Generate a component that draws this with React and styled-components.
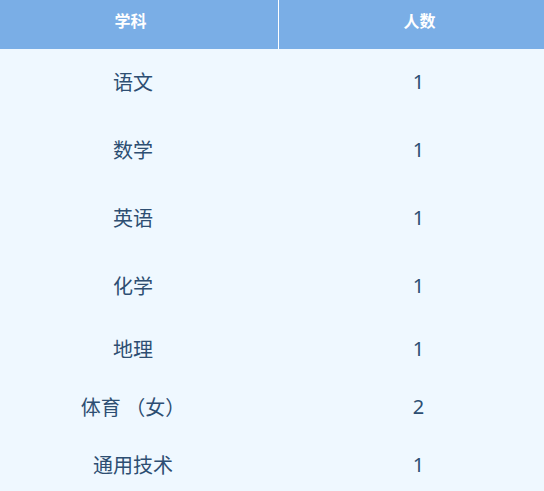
import React from 'react';
import styled, { createGlobalStyle } from 'styled-components';

const GlobalStyle = createGlobalStyle`
  html, body {
    margin: 0;
    padding: 0;
    background: #eff8ff;
    overflow: hidden;
  }
  body {
    font-family: "Noto Sans", "Noto Sans CJK SC", sans-serif;
  }
`;

const Page = styled.div`
  width: 544px;
  height: 491px;
  overflow: hidden;
  background: #eff8ff;
`;

const Table = styled.div`
  width: 556px;
`;

const Row = styled.div`
  display: grid;
  grid-template-columns: 279px 277px;
  height: ${({ h }) => h}px;
`;

const HeadRow = styled(Row)`
  background: #7aaee6;
`;

const HeadCell = styled.div`
  display: flex;
  align-items: center;
  justify-content: center;
  padding-bottom: 10px;
  box-sizing: border-box;
  color: #ffffff;
  font-family: "Noto Sans CJK SC", sans-serif;
  font-weight: 700;
  font-size: 16px;
  border-right: ${({ divider }) => (divider ? '1px solid #ffffff' : 'none')};
  padding-right: ${({ divider }) => (divider ? '17px' : '0')};
  padding-left: ${({ divider }) => (divider ? '0' : '4px')};
`;

const Cell = styled.div`
  display: flex;
  align-items: center;
  justify-content: center;
  box-sizing: border-box;
  padding-bottom: 3px;
  color: #2d4e72;
  font-size: 20px;
  font-family: "Noto Sans CJK SC", sans-serif;
  padding-right: ${({ first }) => (first ? '13px' : '0')};
  padding-left: ${({ first }) => (first ? '0' : '2px')};
`;

const Num = styled(Cell)`
  font-family: "Noto Sans", sans-serif;
`;

const rows = [
  { name: '语文', count: 1, h: 68 },
  { name: '数学', count: 1, h: 68 },
  { name: '英语', count: 1, h: 68 },
  { name: '化学', count: 1, h: 68 },
  { name: '地理', count: 1, h: 58 },
  { name: '体育 （女）', count: 2, h: 58 },
  { name: '通用技术', count: 1, h: 58 },
];

export default function App() {
  return (
    <Page>
      <GlobalStyle />
      <Table>
        <HeadRow h={49}>
          <HeadCell divider>学科</HeadCell>
          <HeadCell>人数</HeadCell>
        </HeadRow>
        {rows.map((r) => (
          <Row key={r.name} h={r.h}>
            <Cell first>{r.name}</Cell>
            <Num>{r.count}</Num>
          </Row>
        ))}
      </Table>
    </Page>
  );
}
